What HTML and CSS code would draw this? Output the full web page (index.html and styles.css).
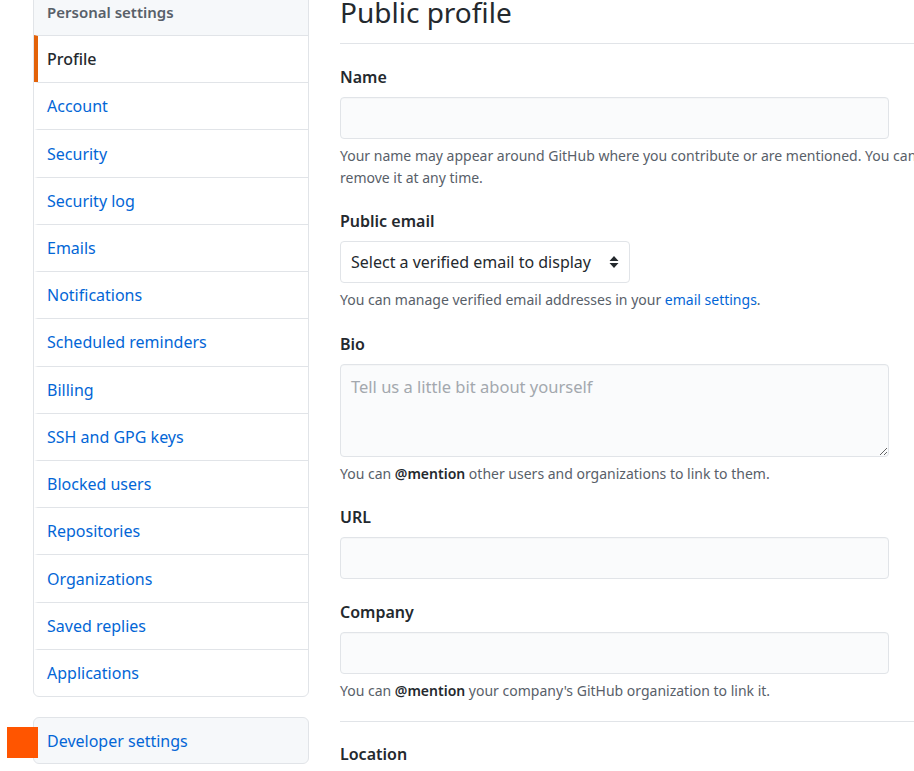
FILE: index.html
```html
<!DOCTYPE html>
<html lang="en">
<head>
<meta charset="utf-8">
<title>Public profile</title>
<link rel="stylesheet" href="styles.css">
</head>
<body>
<div class="layout">
  <aside class="sidebar">
    <nav class="menu">
      <div class="menu-heading">Personal settings</div>
      <a class="menu-item selected" href="#">Profile</a>
      <a class="menu-item" href="#">Account</a>
      <a class="menu-item" href="#">Security</a>
      <a class="menu-item" href="#">Security log</a>
      <a class="menu-item" href="#">Emails</a>
      <a class="menu-item" href="#">Notifications</a>
      <a class="menu-item" href="#">Scheduled reminders</a>
      <a class="menu-item" href="#">Billing</a>
      <a class="menu-item" href="#">SSH and GPG keys</a>
      <a class="menu-item" href="#">Blocked users</a>
      <a class="menu-item" href="#">Repositories</a>
      <a class="menu-item" href="#">Organizations</a>
      <a class="menu-item" href="#">Saved replies</a>
      <a class="menu-item" href="#">Applications</a>
    </nav>
    <nav class="menu dev">
      <span class="marker"></span>
      <a class="menu-item" href="#">Developer settings</a>
    </nav>
  </aside>
  <main class="main">
    <h1 class="subhead">Public profile</h1>
    <div class="form-group first">
      <label class="label">Name</label>
      <input class="input" type="text">
      <p class="note">Your name may appear around GitHub where you contribute or are mentioned. You can remove it at any time.</p>
    </div>
    <div class="form-group">
      <label class="label">Public email</label>
      <div class="select">
        <span>Select a verified email to display</span>
        <svg class="arrows" width="10" height="16" viewBox="0 0 10 16"><path d="M5 2 L9.5 7 L0.5 7 Z M5 14 L9.5 9 L0.5 9 Z" fill="#24292e"/></svg>
      </div>
      <p class="note">You can manage verified email addresses in your <a href="#">email settings</a>.</p>
    </div>
    <div class="form-group bio">
      <label class="label">Bio</label>
      <textarea class="input textarea" placeholder="Tell us a little bit about yourself"></textarea>
      <p class="note">You can <strong>@mention</strong> other users and organizations to link to them.</p>
    </div>
    <div class="form-group">
      <label class="label">URL</label>
      <input class="input" type="text">
    </div>
    <div class="form-group company">
      <label class="label">Company</label>
      <input class="input" type="text">
      <p class="note">You can <strong>@mention</strong> your company's GitHub organization to link it.</p>
    </div>
    <hr class="divider">
    <div class="form-group">
      <label class="label">Location</label>
    </div>
  </main>
</div>
</body>
</html>
```
FILE: styles.css
```css
html, body {
  margin: 0;
  padding: 0;
  overflow: hidden;
  background: #ffffff;
}
body {
  font-family: "Noto Sans", "Open Sans", sans-serif;
  color: #24292e;
  width: 914px;
  height: 771px;
}
.layout {
  display: flex;
  padding-left: 33px;
}
.sidebar {
  width: 276px;
  flex: none;
  margin-top: -12px;
}
.menu {
  border: 1px solid #e1e4e8;
  border-radius: 6px;
  background: #fff;
  display: flex;
  flex-direction: column;
  position: relative;
}
.menu-heading {
  height: 46px;
  display: flex;
  align-items: center;
  padding: 0 13px;
  background: #f6f8fa;
  font-size: 15px;
  font-weight: 600;
  color: #586069;
  border-radius: 6px 6px 0 0;
}
.menu-item {
  height: 46.23px;
  display: flex;
  align-items: center;
  padding: 0 13px 0 9px;
  border-top: 1px solid #e1e4e8;
  border-left: 4px solid transparent;
  font-size: 16px;
  color: #0366d6;
  text-decoration: none;
}
.menu-item.selected {
  border-left-color: #e36209;
  color: #24292e;
  font-weight: 500;
}
.dev {
  margin-top: 20px;
  background: #f6f8fa;
}
.dev .menu-item {
  border-top: 0;
  height: 45px;
}
.marker {
  position: absolute;
  left: -27px;
  top: 9px;
  width: 31px;
  height: 31px;
  background: #ff5500;
}
.main {
  margin-left: 31px;
  width: 600px;
  flex: none;
}
.subhead {
  margin: 0;
  padding-bottom: 19px;
  font-size: 28px;
  line-height: 24px;
  font-weight: 400;
  border-bottom: 1px solid #e1e4e8;
}
.form-group {
  margin-top: 20px;
  display: flex;
  flex-direction: column;
  align-items: flex-start;
}
.form-group.first {
  margin-top: 21px;
}
.bio {
  margin-top: 21px;
}
.company {
  margin-top: 21px;
}
.label {
  font-size: 16px;
  font-weight: 600;
  line-height: 24px;
  margin-bottom: 8px;
}
.input {
  box-sizing: border-box;
  width: 549px;
  height: 42px;
  background: #fafbfc;
  border: 1px solid #e1e4e8;
  border-radius: 4px;
  box-shadow: inset 0 1px 0 rgba(225, 228, 232, 0.2);
  font: inherit;
  margin: 0;
}
.textarea {
  height: 93px;
  padding: 10px 10px;
  font-size: 16.5px;
  resize: vertical;
  display: block;
}
.textarea::placeholder {
  color: #a3a8ae;
}
.select {
  box-sizing: border-box;
  width: 290px;
  height: 42px;
  border: 1px solid #e1e4e8;
  border-radius: 4px;
  display: flex;
  align-items: center;
  justify-content: space-between;
  padding: 0 10px;
  font-size: 16px;
  background: #fff;
}
.note {
  margin: 6px 0 0;
  font-size: 14px;
  line-height: 22px;
  color: #586069;
}
.note a {
  color: #0366d6;
  text-decoration: none;
}
.note strong {
  color: #24292e;
  font-weight: 600;
}
.divider {
  margin: 19px 0 0;
  border: 0;
  border-top: 1px solid #e1e4e8;
  height: 0;
}
```
